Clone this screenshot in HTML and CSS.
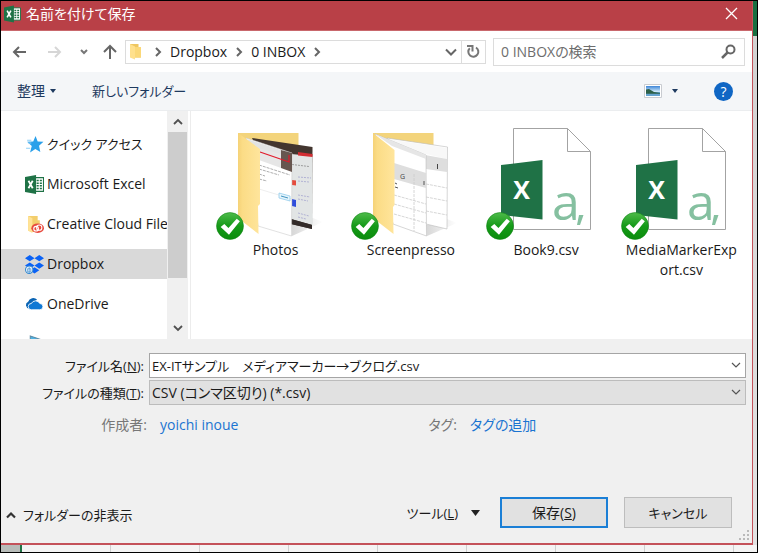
FILE: index.html
```html
<!DOCTYPE html>
<html lang="ja">
<head>
<meta charset="utf-8">
<title>名前を付けて保存</title>
<link rel="stylesheet" href="styles.css">
</head>
<body>
<svg class="defs" width="0" height="0" aria-hidden="true">
  <defs>
    <linearGradient id="flap" x1="0" y1="0" x2="1" y2="0"><stop offset="0" stop-color="#f5d277"/><stop offset=".2" stop-color="#fbdc86"/><stop offset="1" stop-color="#ffe59c"/></linearGradient>
    <linearGradient id="ok" x1="0" y1="0" x2="0" y2="1"><stop offset="0" stop-color="#4fbb4b"/><stop offset=".5" stop-color="#159a18"/><stop offset="1" stop-color="#0b8c0c"/></linearGradient>
    <linearGradient id="shade" x1="0" y1="0" x2="1" y2="0"><stop offset="0" stop-color="#bbb"/><stop offset="1" stop-color="#fff"/></linearGradient>
    <linearGradient id="sky" x1="0" y1="0" x2="0" y2="1"><stop offset="0" stop-color="#3d86d8"/><stop offset="1" stop-color="#d8effa"/></linearGradient>
    <symbol id="excel" viewBox="0 0 18 18">
      <path d="M9 2.500h8.500v13H9z" fill="#fff" stroke="#1f7246"/>
      <path d="M11 4.500h2v1.500h-2zM14 4.500h2v1.500h-2zM11 7h2v1.500h-2zM14 7h2v1.500h-2zM11 9.500h2V11h-2zM14 9.500h2V11h-2zM11 12h2v1.500h-2zM14 12h2v1.500h-2z" fill="#1f7246"/>
      <path d="M0 2l10.500-2v18L0 16z" fill="#1f7246"/>
      <path d="M3.300 5.500l4 7M7.300 5.500l-4 7" stroke="#fff" stroke-width="1.700"/>
    </symbol>
    <symbol id="badge" viewBox="0 0 27 27">
      <circle cx="13.500" cy="13.500" r="13" fill="url(#ok)" stroke="#0a8210" stroke-width=".5"/>
      <path d="M4.500 14.500l3.500-3 4 4 8-9 3 2.500-10.500 13z" fill="#fff"/>
    </symbol>
    <symbol id="csv" viewBox="0 0 124 125">
      <path d="M29.500 13.500H83.500L106.500 36.500V114.500H29.500z" fill="#fff" stroke="#a3a3a3"/>
      <path d="M83.500 13.500V36.500H106.500" fill="none" stroke="#a3a3a3"/>
      <path d="M17 50l41.500-5v59.500L17 100z" fill="#1f7246"/>
      <text x="37.500" y="84" text-anchor="middle" font-size="25" font-weight="700" fill="#fff">X</text>
      <text x="68" y="105" font-size="50" font-weight="500" fill="#85c0a0">a</text>
      <path d="M95 100h4.500l-3.500 10h-3z" fill="#85c0a0"/>
      <use href="#badge" x="2" y="97" width="28" height="28"/>
    </symbol>
    <symbol id="chev" viewBox="0 0 10 10"><path d="M1 3l4 4 4-4" fill="none" stroke="currentColor" stroke-width="1.200"/></symbol>
    <symbol id="crumb" viewBox="0 0 8 10"><path d="M2 1l4 4-4 4" fill="none" stroke="#666" stroke-width="2"/></symbol>
  </defs>
</svg>

<div class="desktop">
  <div class="dialog" role="dialog" aria-label="名前を付けて保存">
    <header class="titlebar">
      <svg class="app-icon" aria-hidden="true"><use href="#excel"/></svg>
      <h1>名前を付けて保存</h1>
      <button class="close" aria-label="閉じる"><svg width="13" height="13" viewBox="0 0 13 13"><path d="M1 1l11 11M12 1L1 12" stroke="#fff" stroke-width="1.300"/></svg></button>
    </header>

    <nav class="navbar">
      <button class="step" aria-label="戻る"><svg width="14" height="12" viewBox="0 0 14 12"><path d="M14 6H2M7 1L2 6l5 5" fill="none" stroke="#666" stroke-width="2"/></svg></button>
      <button class="step" aria-label="進む"><svg width="14" height="12" viewBox="0 0 14 12"><path d="M0 6h12M7 1l5 5-5 5" fill="none" stroke="#d6d6d6" stroke-width="2"/></svg></button>
      <button class="recent" aria-label="最近表示した場所"><svg width="8" height="8" viewBox="0 0 8 8"><path d="M1 2l3 3 3-3" fill="none" stroke="#777" stroke-width="2"/></svg></button>
      <button class="up" aria-label="上へ"><svg width="14" height="15" viewBox="0 0 14 15"><path d="M7 15V2M1 8l6-6 6 6" fill="none" stroke="#666" stroke-width="2"/></svg></button>
      <div class="address">
        <svg width="13" height="17" viewBox="0 0 13 17" aria-hidden="true"><path d="M1 1h8.500v3H12v10.500H6L1 14z" fill="#eec660"/><path d="M1 1l5 2.500V16.500L1 14.500z" fill="#ffe08c"/><path d="M6 4h6v10.500H6z" fill="#fbd878"/></svg>
        <svg class="sep" width="8" height="10" aria-hidden="true"><use href="#crumb"/></svg>
        <a href="#dropbox">Dropbox</a>
        <svg class="sep" width="8" height="10" aria-hidden="true"><use href="#crumb"/></svg>
        <a href="#inbox">0 INBOX</a>
        <svg class="sep" width="8" height="10" aria-hidden="true"><use href="#crumb"/></svg>
        <button class="history" aria-label="以前の場所"><svg width="12" height="10" viewBox="0 0 12 10"><path d="M1 2.500l5 5 5-5" fill="none" stroke="#666" stroke-width="2"/></svg></button>
        <button class="refresh" aria-label="最新の情報に更新"><svg width="15" height="15" viewBox="0 0 15 15"><path d="M10 3.500A5 5 0 1 1 3.800 4.200" fill="none" stroke="#777" stroke-width="2"/><path d="M1 2h5.500v5.500" fill="none" stroke="#777" stroke-width="2"/></svg></button>
      </div>
      <div class="search">
        <input type="search" aria-label="検索" placeholder="0 INBOXの検索">
        <svg width="15" height="15" viewBox="0 0 15 15" aria-hidden="true"><circle cx="9.500" cy="5.500" r="4" fill="none" stroke="#666" stroke-width="2"/><path d="M6.500 8.500L1 14" stroke="#666" stroke-width="2.500"/></svg>
      </div>
    </nav>

    <div class="toolbar">
      <button class="organize">整理 <svg width="6" height="4" viewBox="0 0 6 4"><path d="M0 0h6L3 4z" fill="#1e3a5f"/></svg></button>
      <button class="compact">新しいフォルダー</button>
      <button class="view" aria-label="表示方法"><svg width="18" height="14" viewBox="0 0 18 14"><path d="M.5.500h17v13H.5z" fill="#fff" stroke="#c9ccd1"/><path d="M2 2h14v6H2z" fill="url(#sky)"/><path d="M2 8h14v4H2z" fill="#65a3cf"/><path d="M2 5.500l3-.5 5 3 6 1v.8H2z" fill="#2d6048"/></svg><svg width="6" height="4" viewBox="0 0 6 4"><path d="M0 0h6L3 4z" fill="#1e3a5f"/></svg></button>
      <button class="help" aria-label="ヘルプ">?</button>
    </div>

    <main class="browser">
      <div class="tree">
        <a href="#quick" class="compact"><svg viewBox="0 0 18 18"><path d="M10 1l2 5.200 5.500.3-4.200 3.700 1.200 6-4.700-3-5 3.300 1.600-6L2 6.500l5.800-.4z" fill="#2aa0ea"/><path d="M2 5h4M3 7.500h3M1 12.500h4" stroke="#8fd0f6"/></svg>クイック アクセス</a>
        <a href="#excel-files"><svg viewBox="0 0 18 18"><use href="#excel"/></svg>Microsoft Excel</a>
        <a href="#creative"><svg viewBox="0 0 18 18"><path d="M3 1h9v4h2v11H7L3 15z" fill="#f3ce6d"/><path d="M3 1l4 2v14l-4-2z" fill="#ffe396"/><ellipse cx="12" cy="12.500" rx="6" ry="4.500" fill="#e8493d"/><circle cx="10.500" cy="13" r="2.200" fill="none" stroke="#fff"/><circle cx="13.500" cy="12" r="2.500" fill="none" stroke="#fff"/></svg>Creative Cloud Files</a>
        <a href="#dropbox" class="selected"><svg viewBox="0 0 18 18"><path d="M4.500 0L9 3 4.500 6 0 3zM13.500 0L18 3l-4.500 3L9 3zM4.500 7L9 10l-4.500 3L0 10zM13.500 7l4.500 3-4.500 3L9 10zM9 11.500l4.500 3L9 17.500l-4.500-3z" fill="#0a62f5"/><circle cx="4" cy="14" r="3.500" fill="#eef5fb" stroke="#2f86cf"/><path d="M2.500 13h3v3h-3zM4 11.500V17" fill="none" stroke="#4893d2" stroke-width=".7"/></svg>Dropbox</a>
        <a href="#onedrive"><svg viewBox="0 0 18 18"><path d="M4 13a4 3.500 0 0 1-1-6.500 5 5 0 0 1 8.500-2L5.500 8z" fill="#0a64b4"/><path d="M6 14a3 3 0 0 1 0-6A4.500 4.500 0 0 1 14 8a3 3 0 0 1 0 6z" fill="#0f78d4" stroke="#fff" stroke-width=".8"/></svg>OneDrive</a>
        <a href="#pc"><svg viewBox="0 0 18 18"><path d="M5 1l12 4v8H5z" fill="#4db3e6" stroke="#5f8da6"/></svg>PC</a>
      </div>
      <div class="scrollbar" aria-hidden="true">
        <svg width="10" height="10" viewBox="0 0 10 10"><path d="M1 7l4-4 4 4" fill="none" stroke="#505050" stroke-width="1.800"/></svg>
        <span class="thumb"></span>
        <svg width="10" height="10" viewBox="0 0 10 10"><path d="M1 3l4 4 4-4" fill="none" stroke="#505050" stroke-width="1.800"/></svg>
      </div>
      <ul class="files">
        <li>
          <svg viewBox="0 0 124 125" aria-hidden="true">
            <path d="M77 109l22-6 10 4-31 14z" fill="url(#shade)" opacity=".6"/>
            <path d="M24 18h60.500v30H24z" fill="#f3d47c"/>
            <path d="M38 23l60.500 9L98 114l-21-5z" fill="#43362f"/>
            <path d="M77 39l21.500 2v69L77 104z" fill="#e2e5e5"/>
            <path d="M84 37l14.500 2v3L84 40.500z" fill="#d22e33"/>
            <path d="M78 49.500l17 2" stroke="#888" stroke-width=".8" stroke-dasharray="2 1"/>
            <path d="M84 62l13 1M84 66l11 1M84 80l12 2M84 84l10 2M84 98l11 3M84 102l8 2" stroke="#9c9ccb" stroke-width=".7" stroke-dasharray="2 1"/>
            <path d="M78 65l4 .5v5l-4-.5z" fill="#e44b3d"/><path d="M78 84l4 1v7l-4-1z" fill="#304edb"/>
            <path d="M77 104l21 6v4l-21-5z" fill="#332b29"/>
            <path d="M32 23l46 15-.5 83L44 111z" fill="#fff" stroke="#ccc" stroke-width=".6"/>
            <path d="M33 24l34 11v17l11 4v-3L44 42z" fill="#e2e3e3"/><path d="M44 33l23 6v14l-22-8z" fill="#e6e6e6"/>
            <path d="M67 35l11 3v19l-11-4z" fill="#67564f"/>
            <path d="M46 37l29 10v-7" fill="none" stroke="#e11a2b" stroke-width="1.200"/>
            <path d="M45 50l31 10M45 54l20 6M45 59l6 2M45 64l8 2" stroke="#999" stroke-width=".8" stroke-dasharray="3 1"/>
            <path d="M45 74l33 10" stroke="#ddd" stroke-width=".5"/><path d="M65 78l11 3v5l-11-3z" fill="#e6f5fc" stroke="#87c6e8" stroke-width=".7"/><path d="M67 81l7 2" stroke="#4194c1"/>
            <path d="M24 18l22 16v55l-2 2 .5 28L24 103z" fill="url(#flap)"/>
            <use href="#badge" x="2" y="97" width="28" height="28"/>
          </svg>
          <span>Photos</span>
        </li>
        <li>
          <svg viewBox="0 0 124 125" aria-hidden="true">
            <path d="M77 110l21-6 10 4-30 13z" fill="url(#shade)" opacity=".6"/>
            <path d="M24 18h60.500v30H24z" fill="#f3d47c"/>
            <path d="M38 23l60.500 9-.5 82-21-5z" fill="#fff" stroke="#bbb" stroke-width=".6"/>
            <path d="M38 24l60 9v11L60 35z" fill="#f8f8f8"/><path d="M76 40l22 4v13l-21-3z" fill="#dedede"/><path d="M88.500 49v5" stroke="#444"/>
            <path d="M77 69l21 4M77 82l21 4M77 96l21 4" stroke="#ccc" stroke-width=".8" stroke-dasharray="3 1"/>
            <path d="M26 19l51 21 .5 81L44 109z" fill="#fff" stroke="#bbb" stroke-width=".6"/>
            <path d="M26 19l51 21v4L43 31z" fill="#e6e6e6"/>
            <path d="M45 48l32 10v15L45 64z" fill="#dedede"/>
            <text x="51" y="64" font-size="7" fill="#444">G</text>
            <path d="M45 80l32 9M45 89l32 9M45 99l32 9M65 59v57" stroke="#ccc" stroke-width=".8" stroke-dasharray="3 1"/>
            <path d="M46 68l2 1M46 72l3 1M75 66v4" stroke="#555"/>
            <path d="M24 18l21.500 17v55l-1.500 2 .5 27L24 103z" fill="url(#flap)"/>
            <use href="#badge" x="2" y="97" width="28" height="28"/>
          </svg>
          <span>Screenpresso</span>
        </li>
        <li><svg viewBox="0 0 124 125" aria-hidden="true"><use href="#csv"/></svg><span>Book9.csv</span></li>
        <li><svg viewBox="0 0 124 125" aria-hidden="true"><use href="#csv"/></svg><span>MediaMarkerExp<wbr>ort.csv</span></li>
      </ul>
    </main>

    <form class="details">
      <div class="fields">
        <label class="compact" for="filename">ファイル名(<u>N</u>):</label>
        <div class="combo">
          <input id="filename" class="compact" type="text" value="EX-ITサンプル　メディアマーカー→ブクログ.csv">
          <svg aria-hidden="true"><use href="#chev"/></svg>
        </div>
        <label class="compact" for="filetype">ファイルの種類(<u>T</u>):</label>
        <div class="combo">
          <select id="filetype"><option>CSV (コンマ区切り) (*.csv)</option></select>
          <svg aria-hidden="true"><use href="#chev"/></svg>
        </div>
      </div>
      <div class="meta">
        <span class="key">作成者:</span><a href="#author">yoichi inoue</a>
        <span>タグ:</span><a href="#tags">タグの追加</a>
      </div>
      <div class="actions">
        <button type="button" class="hide compact"><svg width="10" height="8" viewBox="0 0 10 8"><path d="M1 6.500l4-4 4 4" fill="none" stroke="#333" stroke-width="2.200"/></svg>フォルダーの非表示</button>
        <button type="button" class="tools compact"><span>ツール(<u>L</u>)</span><svg width="9" height="6" viewBox="0 0 9 6"><path d="M0 0h9L4.500 6z" fill="#222"/></svg></button>
        <button type="button" class="push primary">保存(<u>S</u>)</button>
        <button type="button" class="push compact">キャンセル</button>
      </div>
      <svg class="grip" width="11" height="11" viewBox="0 0 11 11" aria-hidden="true"><path d="M8 0h2v2H8zM4 4h2v2H4zM8 4h2v2H8zM0 8h2v2H0zM4 8h2v2H4zM8 8h2v2H8z" fill="#b9b9b9"/></svg>
    </form>
  </div>
  <div class="behind-right"></div>
  <div class="behind-bottom"></div>
</div>
</body>
</html>
```
FILE: styles.css
```css
* { box-sizing: border-box; }

body {
  margin: 0;
  font: 14px/20px "Open Sans", "Noto Sans CJK JP", sans-serif;
  font-feature-settings: "palt";
  color: #1a1a1a;
  background: #000;
}

button, input, select {
  font: inherit;
  font-feature-settings: inherit;
  color: inherit;
}

button {
  border: 0;
  padding: 0;
  background: none;
  white-space: nowrap;
}

a { color: inherit; text-decoration: none; }

.compact { font-size: 13px; }

.defs { position: absolute; }

.desktop {
  display: grid;
  grid-template-columns: 1fr 4px;
  grid-template-rows: 1fr 7px;
  height: 100vh;
  padding: 1px;
}

.dialog {
  display: flex;
  flex-direction: column;
  min-height: 0;
  border: solid #c4525a;
  border-width: 0 1px 2px 0;
  background: #fff;
}

.behind-right {
  background: linear-gradient(#186f41 35px, #d2d2d2 35px, #e2e2e2 100%);
}

.behind-bottom {
  grid-column: 1 / -1;
  background:
    linear-gradient(90deg, #b8bcb9 19px, #217346 19px, #217346 21px, transparent 21px),
    repeating-linear-gradient(90deg, #f4f4f4 0, #f4f4f4 20px, #d0d0d0 20px, #d0d0d0 21px, #f4f4f4 21px, #f4f4f4 89px);
}

.titlebar {
  display: flex;
  align-items: center;
  gap: 5px;
  height: 30px;
  padding: 0 14px 4px 3px;
  background: #b94047;
  border-bottom: 1px solid #c9686d;
  color: #fff;
}

.titlebar h1 { flex: 1; margin: 0; font-size: 14px; font-weight: 400; }

.app-icon { width: 17px; height: 18px; }

.close, .step, .recent, .up, .history, .refresh {
  display: flex;
  align-items: center;
  justify-content: center;
}

.navbar {
  display: flex;
  align-items: center;
  gap: 10px;
  height: 41px;
  padding: 0 7px 0 5px;
}

.step { width: 26px; height: 26px; }
.recent { width: 12px; height: 26px; }
.up { width: 20px; height: 26px; margin-right: -5px; }

.address {
  display: flex;
  flex: 1;
  align-items: center;
  height: 24px;
  padding-left: 3px;
  border: 1px solid #dcdcdc;
}

.address .sep { margin: 0 8px; }
.address .sep:nth-of-type(2) { margin-left: 12px; }

.history { width: 20px; margin-left: auto; }
.refresh { width: 24px; height: 22px; border-left: 1px solid #dcdcdc; }

.search {
  display: flex;
  align-items: center;
  width: 252px;
  height: 28px;
  margin-left: -3px;
  padding: 0 8px 0 7px;
  border: 1px solid #dcdcdc;
}

.search input {
  flex: 1;
  min-width: 0;
  padding: 0;
  border: 0;
  outline: 0;
  background: none;
}

.search input::placeholder { color: #6d6d6d; }

.toolbar {
  display: flex;
  align-items: center;
  gap: 36px;
  height: 39px;
  padding: 0 19px 0 16px;
  background: #f4f6f8;
  border-bottom: 1px solid #ebedef;
  color: #1e3a5f;
}

.organize, .view, .hide, .tools { display: flex; align-items: center; }
.organize { gap: 5px; }
.view { gap: 10px; margin-left: auto; }

.help {
  width: 19px;
  height: 19px;
  border-radius: 50%;
  background: #0f66c4;
  color: #fff;
  line-height: 19px;
}

.browser {
  display: flex;
  flex: 1;
  min-height: 0;
  overflow: hidden;
}

.tree {
  display: flex;
  flex-direction: column;
  gap: 10px;
  width: 166px;
  padding-top: 18px;
  overflow: hidden;
}

.tree a {
  display: flex;
  flex: none;
  align-items: center;
  gap: 3px;
  height: 30px;
  padding-left: 24px;
  white-space: nowrap;
}

.tree svg { flex: none; width: 19px; height: 19px; }
.tree .selected { background: #d9d9d9; }

.scrollbar {
  display: flex;
  flex-direction: column;
  align-items: center;
  width: 21px;
  padding: 6px 0;
  background: #f0f0f0;
}

.thumb { width: 19px; height: 146px; margin: 5px 0 auto; background: #cdcdcd; }

.files {
  display: grid;
  flex: 1;
  grid-template-columns: repeat(4, 1fr);
  margin: 0 0 0 2px;
  padding: 4px 3px 0 17px;
  border-left: 1px solid #ececec;
  list-style: none;
}

.files li {
  display: flex;
  flex-direction: column;
  align-items: center;
  text-align: center;
}

.files svg { width: 124px; height: 125px; }
.files span { max-width: 116px; }

.details {
  position: relative;
  padding: 14px 0 15px;
  background: #f0f0f0;
}

.fields {
  display: grid;
  grid-template-columns: 143px 1fr;
  gap: 2px 5px;
  align-items: center;
  padding-right: 6px;
}

.fields label { text-align: right; }

.combo { position: relative; }

.combo input, .combo select {
  display: block;
  width: 100%;
  height: 25px;
  padding: 0 24px 0 2px;
  border: 1px solid #a5a5a5;
  border-radius: 0;
  outline: 0;
  background: #fff;
  appearance: none;
}

.combo select { border-color: #bcbcbc; background: #e1e1e1; }

.combo svg {
  position: absolute;
  top: 7px;
  right: 5px;
  width: 10px;
  height: 10px;
  color: #555;
  pointer-events: none;
}

.meta {
  display: grid;
  grid-template-columns: 146px 34% auto 1fr;
  gap: 13px;
  margin-top: 10px;
  color: #777;
}

.meta .key { text-align: right; }
.meta a { color: #1b74d1; }

.actions {
  display: flex;
  align-items: center;
  gap: 16px;
  margin-top: 62px;
  padding-right: 20px;
}

.hide { gap: 7px; margin-right: auto; padding: 4px 0 0 5px; }
.tools { gap: 13px; margin-right: 4px; }

.push {
  width: 108px;
  height: 31px;
  border: 1px solid #bdbdbd;
  background: #e1e1e1;
}

.push.primary { border: 2px solid #1b7fd6; }

.grip { position: absolute; right: 2px; bottom: 2px; }
```
